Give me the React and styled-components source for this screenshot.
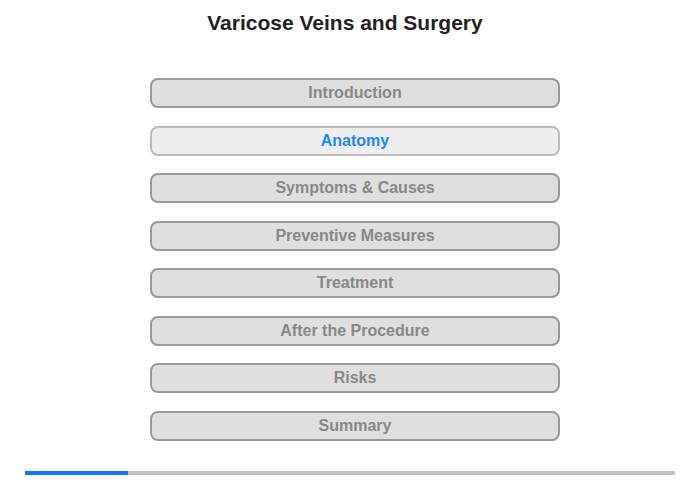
import styled, { createGlobalStyle } from "styled-components";

const GlobalStyle = createGlobalStyle`
  body {
    margin: 0;
    background: #ffffff;
    font-family: "Liberation Sans", Arial, sans-serif;
  }
`;

const items = [
  "Introduction",
  "Anatomy",
  "Symptoms & Causes",
  "Preventive Measures",
  "Treatment",
  "After the Procedure",
  "Risks",
  "Summary",
];

const Page = styled.div`
  width: 700px;
  height: 480px;
  display: flex;
  flex-direction: column;
  align-items: center;
`;

const Title = styled.h1`
  margin: 0 10px 0 0;
  padding-top: 11px;
  height: 78px;
  box-sizing: border-box;
  font-size: 21px;
  font-weight: bold;
  color: #222222;
  line-height: 24px;
`;

const Menu = styled.div`
  display: flex;
  flex-direction: column;
  gap: 17.5px;
  margin-left: 10px;
`;

const MenuButton = styled.div`
  width: 410px;
  height: 30px;
  box-sizing: border-box;
  border-radius: 8px;
  border: 2px solid ${(p) => (p.$active ? "#bbbbbb" : "#999999")};
  background: ${(p) => (p.$active ? "#eeeeee" : "#dfdfdf")};
  color: ${(p) => (p.$active ? "#1e88f5" : "#888888")};
  font-size: 16px;
  font-weight: bold;
  display: flex;
  align-items: center;
  justify-content: center;
`;

const Progress = styled.div`
  margin-top: auto;
  margin-bottom: 5px;
  width: 650px;
  height: 4px;
  background: #c4c4c4;
`;

const ProgressFill = styled.div`
  height: 100%;
  background: #0a7cf7;
`;

export default function App() {
  const active = 1;
  return (
    <Page>
      <GlobalStyle />
      <Title>Varicose Veins and Surgery</Title>
      <Menu>
        {items.map((label, i) => (
          <MenuButton key={label} $active={i === active}>
            {label}
          </MenuButton>
        ))}
      </Menu>
      <Progress>
        <ProgressFill style={{ width: `${(103 / 650) * 100}%` }} />
      </Progress>
    </Page>
  );
}
